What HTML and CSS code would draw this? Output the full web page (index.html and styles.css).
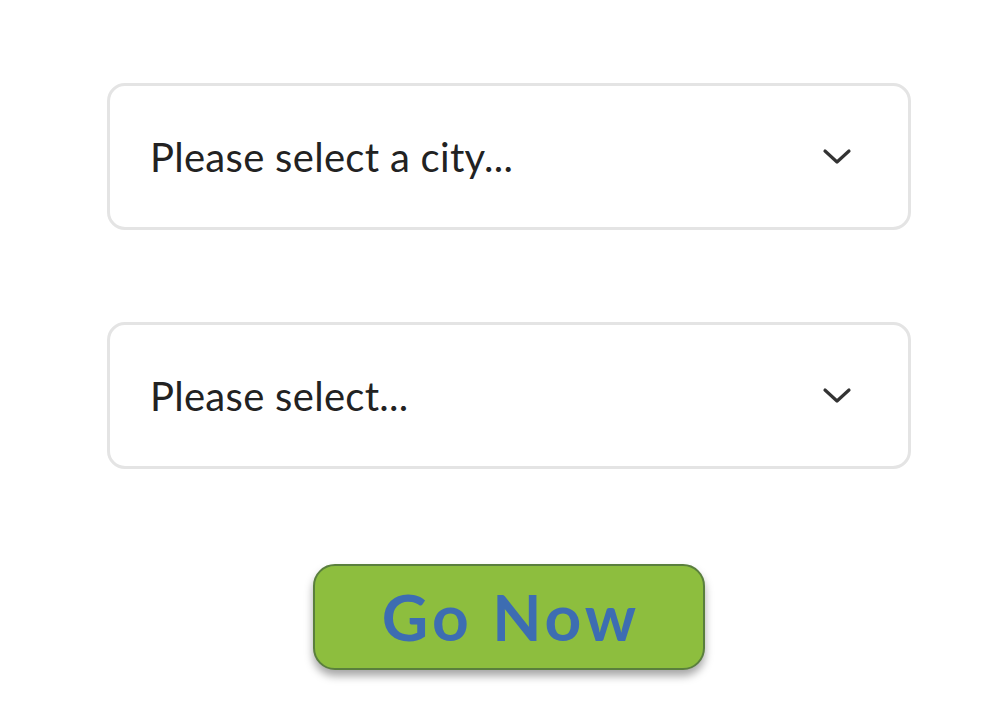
FILE: index.html
```html
<!DOCTYPE html>
<html>
<head>
<meta charset="utf-8">
<link rel="stylesheet" href="styles.css">
</head>
<body>
<div class="form">
  <div class="select">
    <span class="label">Please select a city...</span>
    <svg class="chev" width="30" height="18" viewBox="0 0 30 18"><path d="M3 3 L15 14 L27 3" fill="none" stroke="#333" stroke-width="3.2" stroke-linecap="round" stroke-linejoin="round"/></svg>
  </div>
  <div class="select">
    <span class="label">Please select...</span>
    <svg class="chev" width="30" height="18" viewBox="0 0 30 18"><path d="M3 3 L15 14 L27 3" fill="none" stroke="#333" stroke-width="3.2" stroke-linecap="round" stroke-linejoin="round"/></svg>
  </div>
  <div class="actions">
    <button class="go">Go Now</button>
  </div>
</div>
</body>
</html>
```
FILE: styles.css
```css
html, body {
  margin: 0;
  padding: 0;
  background: #fff;
}
body {
  font-family: "Lato", "Open Sans", sans-serif;
}
.form {
  width: 804px;
  margin-left: 107px;
  padding-top: 83px;
  padding-bottom: 40px;
  display: flex;
  flex-direction: column;
  gap: 92px;
}
.select {
  box-sizing: border-box;
  height: 147px;
  border: 3px solid #e4e4e4;
  border-radius: 18px;
  display: flex;
  align-items: center;
  justify-content: space-between;
  padding: 0 56px 0 40px;
}
.label {
  font-size: 40px;
  color: #222;
  letter-spacing: 0.3px;
}
.chev {
  display: block;
}
.actions {
  display: flex;
  justify-content: center;
}
.go {
  width: 392px;
  height: 106px;
  margin-top: 3px;
  background: #8dbe3e;
  border: 2px solid #5a7f3d;
  border-radius: 22px;
  box-shadow: 0 6px 8px rgba(0,0,0,0.35);
  color: #3d6db2;
  font-family: "Lato", sans-serif;
  font-weight: 700;
  font-size: 64px;
  letter-spacing: 4px;
  padding: 0 0 0 4px;
  line-height: 1;
}
```
